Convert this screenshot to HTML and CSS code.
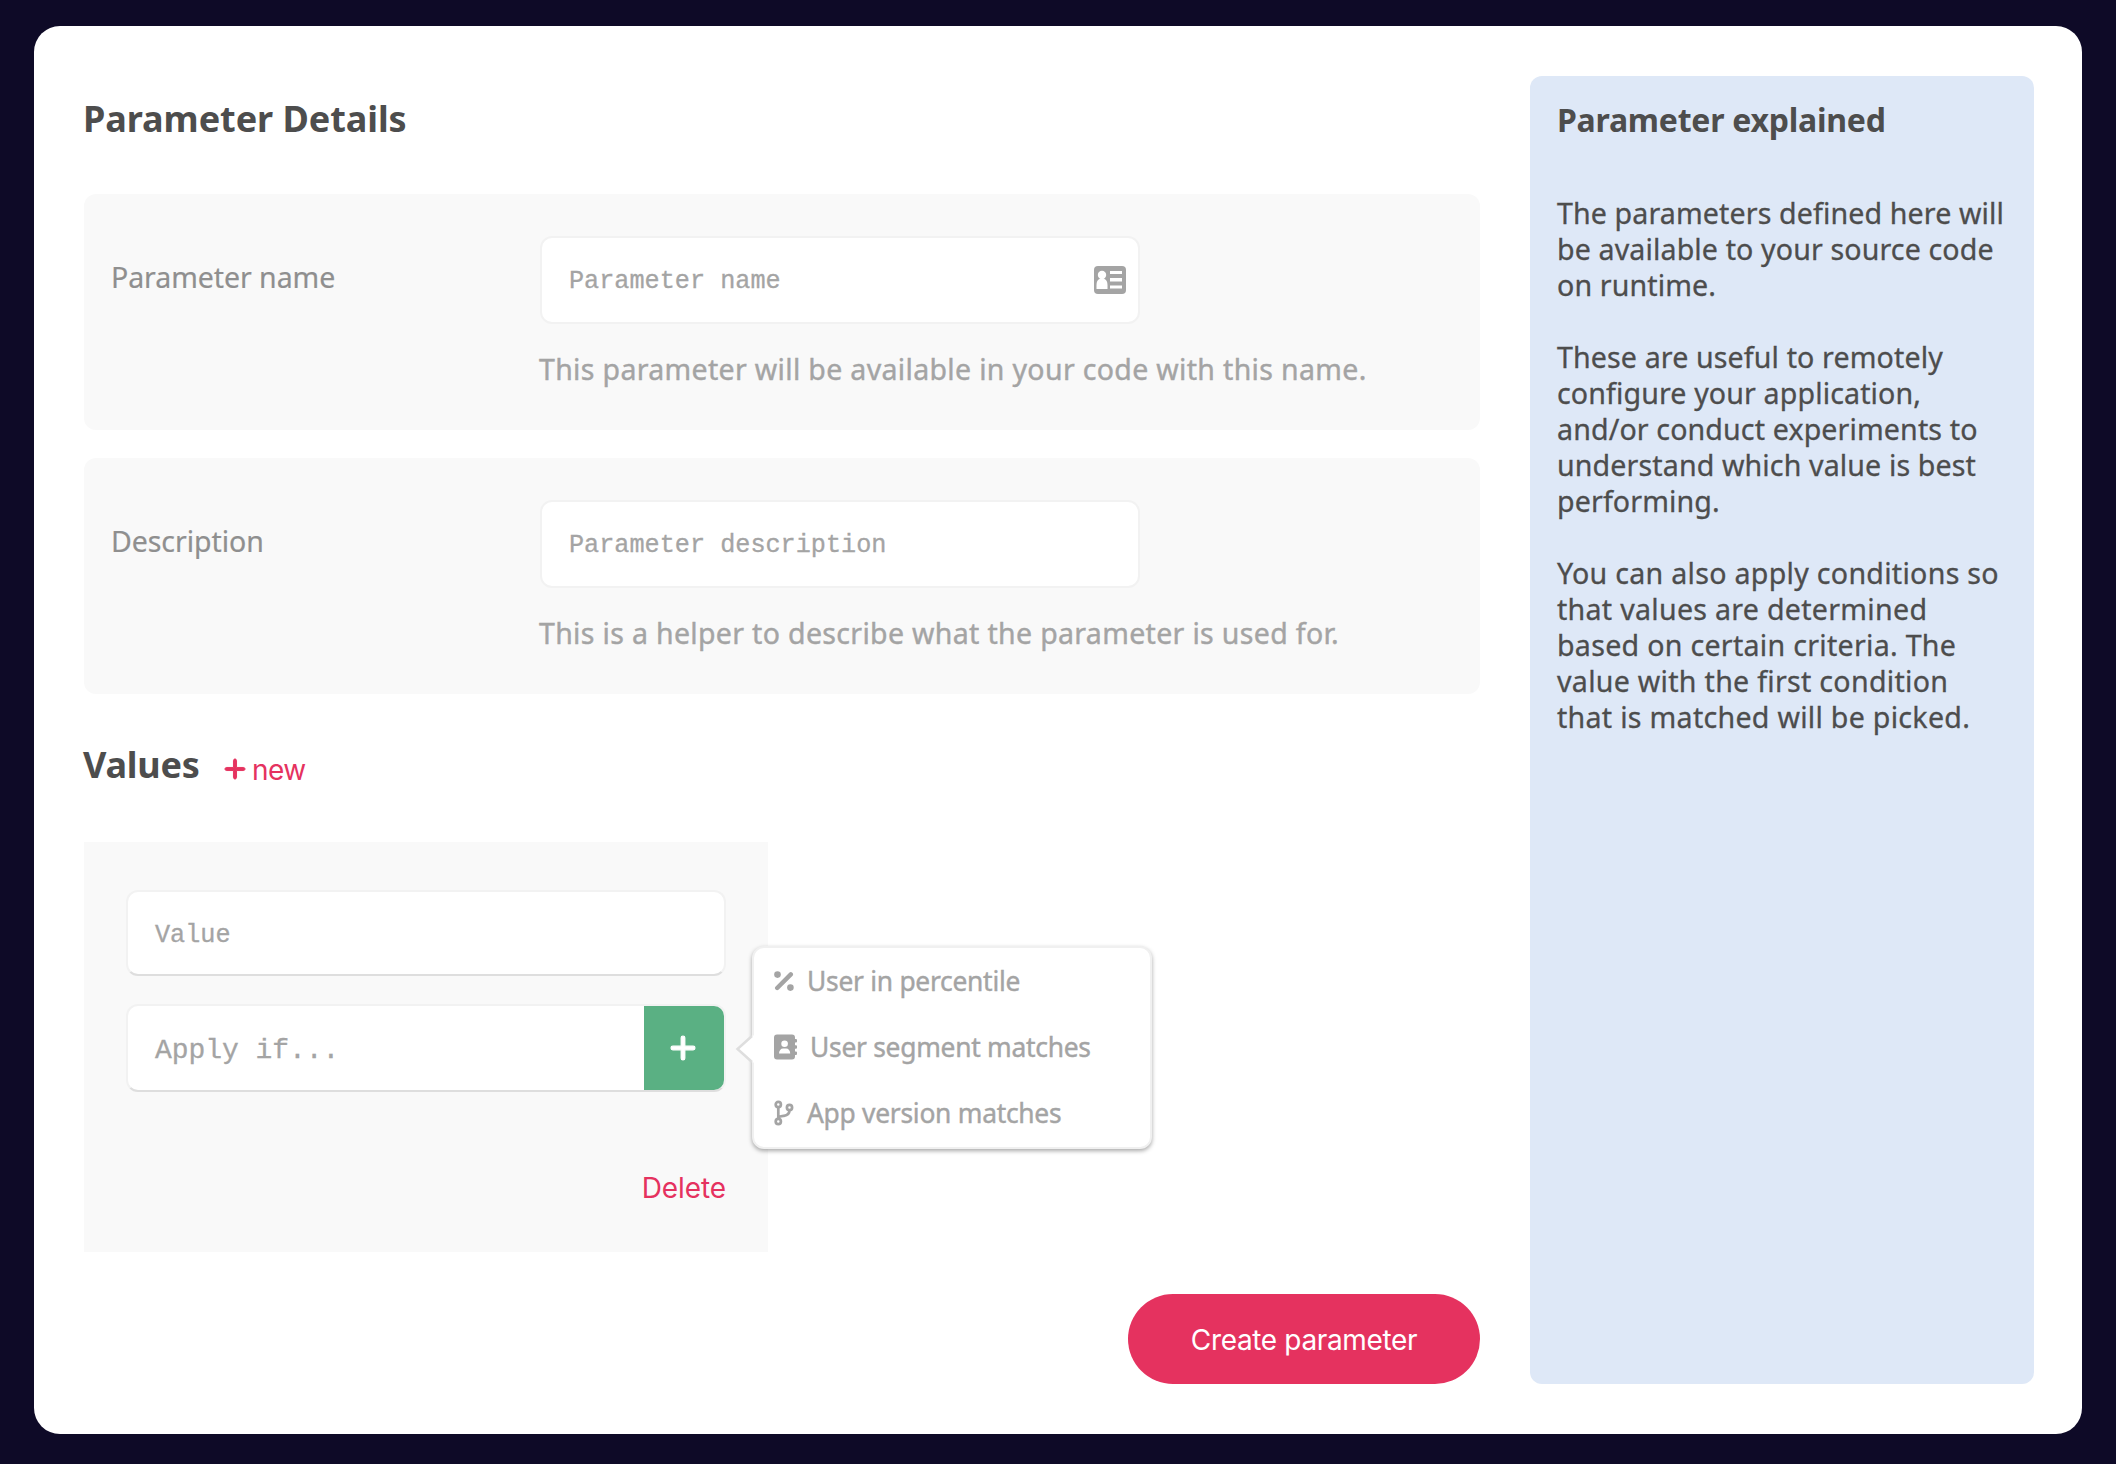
FILE: index.html
```html
<!DOCTYPE html>
<html lang="en">
<head>
<meta charset="utf-8">
<title>Parameter Details</title>
<link rel="stylesheet" href="styles.css">
</head>
<body>
<main class="panel">
  <section class="form">
    <h1 class="heading">Parameter Details</h1>
    <div class="card">
      <div class="label">Parameter name</div>
      <div class="field">
        <div class="input"><span class="placeholder">Parameter name</span>
          <svg class="id-icon" viewBox="0 0 32 28"><rect width="32" height="28" rx="4" fill="#a4a4a4"/><g fill="#fff"><circle cx="8" cy="9" r="4.2"/><path d="M2.500 23v-4c0-3.500 1.200-5.500 3-6h5c1.800.500 3 2.500 3 6v4zM16 5h12v3H16zM16 12h12v3.500H16zM16 19.500h12v3H16z"/></g></svg>
        </div>
        <p class="help">This parameter will be available in your code with this name.</p>
      </div>
    </div>
    <div class="card">
      <div class="label">Description</div>
      <div class="field">
        <div class="input"><span class="placeholder">Parameter description</span></div>
        <p class="help">This is a helper to describe what the parameter is used for.</p>
      </div>
    </div>
    <div class="values-head">
      <h2 class="heading-values">Values</h2>
      <a class="new"><svg class="plus-small" viewBox="16 48 416 416"><path class="plus-shape" d="M256 80c0-17.700-14.300-32-32-32s-32 14.300-32 32V224H48c-17.700 0-32 14.300-32 32s14.300 32 32 32H192V432c0 17.700 14.300 32 32 32s32-14.300 32-32V288H400c17.700 0 32-14.300 32-32s-14.300-32-32-32H256V80z"/></svg><span>new</span></a>
    </div>
    <div class="value-card">
      <div class="input value-input"><span class="placeholder value">Value</span></div>
      <div class="condition">
        <div class="input apply-input">
          <span class="placeholder apply">Apply if...</span>
          <button class="add"><svg class="plus-big" viewBox="16 48 416 416"><path class="plus-shape" d="M256 80c0-17.700-14.300-32-32-32s-32 14.300-32 32V224H48c-17.700 0-32 14.300-32 32s14.300 32 32 32H192V432c0 17.700 14.300 32 32 32s32-14.300 32-32V288H400c17.700 0 32-14.300 32-32s-14.300-32-32-32H256V80z"/></svg></button>
        </div>
        <div class="menu">
          <svg class="arrow" viewBox="0 0 20 30"><path d="M20 1 17 2 2 15 17 28 20 29z" fill="#fff"/><path d="M17 2 2.500 15 17 28" fill="none" stroke="#dedede" stroke-width="2.500"/></svg>
          <div class="item"><svg class="icon-pct" viewBox="0 0 20 20"><path d="M3.200 17 16.800 3.400" stroke="#a4a4a4" stroke-width="4.400" stroke-linecap="round"/><circle cx="3.500" cy="3.600" r="3.300" fill="#a4a4a4"/><circle cx="16.400" cy="16.600" r="3.300" fill="#a4a4a4"/></svg><span>User in percentile</span></div>
          <div class="item"><svg class="icon-book" viewBox="0 0 24 26"><path fill="#a4a4a4" d="M3 .500h15a3 3 0 0 1 3 3v19a3 3 0 0 1-3 3H3a3 3 0 0 1-3-3v-19a3 3 0 0 1 3-3zM21 5h1a1 1 0 0 1 1 1v1.500a1 1 0 0 1-1 1h-1zM21 11.200h1a1 1 0 0 1 1 1v1.500a1 1 0 0 1-1 1h-1zM21 17.400h1a1 1 0 0 1 1 1v1.500a1 1 0 0 1-1 1h-1z"/><circle cx="10.600" cy="9.800" r="3.300" fill="#fff"/><path d="M5 19.500c0-3 1.800-5 4-5h3.200c2.200 0 4 2 4 5z" fill="#fff"/></svg><span>User segment matches</span></div>
          <div class="item"><svg class="icon-branch" viewBox="0 0 20 26"><g fill="none" stroke="#a4a4a4" stroke-width="2.700"><circle cx="4.300" cy="4.500" r="2.600"/><circle cx="15.500" cy="7.500" r="2.600"/><circle cx="4.300" cy="21.500" r="2.600"/><path d="M4.300 7v12M15.500 10c0 4-2 5.300-5.500 5.800-3.500.500-5.200.700-5.700 1.500"/></g></svg><span>App version matches</span></div>
        </div>
      </div>
      <a class="delete">Delete</a>
    </div>
    <button class="create">Create parameter</button>
  </section>
  <aside class="aside">
    <h3 class="aside-title">Parameter explained</h3>
    <p class="para">The parameters defined here will<br>be available to your source code<br>on runtime.</p>
    <p class="para">These are useful to remotely<br>configure your application,<br>and/or conduct experiments to<br>understand which value is best<br>performing.</p>
    <p class="para para-last">You can also apply conditions so<br>that values are determined<br>based on certain criteria. The<br>value with the first condition<br>that is matched will be picked.</p>
  </aside>
</main>
</body>
</html>
```
FILE: styles.css
```css
* { box-sizing: border-box; margin: 0; }
body { background: #0e0a27; padding: 26px 34px 30px; font-family: "Noto Sans", "Open Sans", sans-serif; color: #4d4d4d; }
.panel { height: 1408px; background: #fff; border-radius: 26px; padding: 50px 48px 50px 50px; display: flex; gap: 50px; }
.form { width: 1396px; display: flex; flex-direction: column; }
.heading, .heading-values { font-size: 36px; line-height: 44px; font-weight: 700; white-space: nowrap; letter-spacing: -.06px; }
.heading { margin: 21px 0 53px -1px; }
.card { height: 236px; margin-bottom: 28px; padding: 42px 28px 0 27px; background: #f9f9f9; border-radius: 12px; display: flex; flex: none; }
.label { width: 429px; margin-top: 23px; font-size: 28.5px; line-height: 36px; color: #8f8f8f; letter-spacing: -.06px; -webkit-text-stroke: .2px #8f8f8f; }
.field { width: 840px; }
.input { width: 600px; height: 88px; background: #fff; border: 2px solid #f2f2f2; border-radius: 12px; padding: 0 12px 0 27px; display: flex; align-items: center; justify-content: space-between; flex: none; }
.placeholder { font: 25.2px/36px "Courier New", "Liberation Mono", monospace; color: #a4a4a4; -webkit-text-stroke: .3px #a4a4a4; padding-top: 4px; }
.id-icon { width: 32px; height: 28px; }
.help { margin-top: 27px; margin-left: -1px; font-size: 28.5px; line-height: 36px; color: #a4a4a4; -webkit-text-stroke: .4px #a4a4a4; white-space: nowrap; letter-spacing: .33px; }
.values-head { margin-top: 21px; height: 99px; display: flex; align-items: flex-start; }
.heading-values { width: 142px; margin-left: -1px; letter-spacing: -.2px; }
.new { display: flex; align-items: center; gap: 7px; margin-top: 9px; font: 28px/36px Inter, sans-serif; letter-spacing: -.6px; color: #e5325f; }
.plus-small { width: 20px; height: 20px; margin-top: -2px; overflow: visible; }
.plus-shape { fill: currentColor; stroke: currentColor; stroke-width: 20; }
.value-card { width: 684px; height: 410px; background: #f9f9f9; padding: 48px 42px 0; display: flex; flex-direction: column; flex: none; }
.value-input { height: 86px; border-bottom-color: #dedede; }
.value { padding-top: 6px; }
.condition { position: relative; margin-top: 28px; }
.apply-input { border-bottom-color: #dedede; padding-right: 0; }
.apply { font-size: 28px; padding-top: 6px; letter-spacing: -.05px; }
.add { width: 80px; height: 84px; padding: 0; border: 0; border-radius: 0 10px 10px 0; background: #5ab083; color: #fff; display: flex; align-items: center; justify-content: center; }
.plus-big { width: 24px; height: 24px; margin-right: 2px; overflow: visible; }
.menu { position: absolute; left: 626px; top: -58px; width: 400px; height: 203px; background: #fff; border: 2px solid #f0f0f0; border-radius: 12px; box-shadow: 0 2px 4px rgba(0,0,0,.34); padding: 0 0 0 20px; }
.arrow { position: absolute; left: -19px; top: 86px; width: 20px; height: 30px; }
.item { height: 66px; display: flex; align-items: center; font-size: 26.4px; line-height: 36px; color: #a4a4a4; -webkit-text-stroke: .4px #a4a4a4; white-space: nowrap; letter-spacing: -.27px; }
.icon-pct, .icon-branch { width: 20px; margin-right: 13px; }
.icon-pct { height: 20px; }
.icon-book { width: 24px; height: 26px; margin-right: 12px; }
.icon-branch { height: 26px; }
.delete { margin-top: 78px; align-self: flex-end; font: 28px/36px Inter, sans-serif; letter-spacing: -.1px; color: #e5325f; }
.create { align-self: flex-end; margin-top: 42px; width: 352px; height: 90px; padding: 2px 0 0; border: 0; border-radius: 45px; background: #e5325f; color: #fff; font: 28px/36px Inter, sans-serif; letter-spacing: -.35px; }
.aside { width: 504px; height: 1308px; background: #dee8f7; border-radius: 12px; padding: 24px 0 0 27px; white-space: nowrap; }
.aside-title { font-size: 32px; line-height: 40px; font-weight: 700; letter-spacing: -.25px; margin-bottom: 55px; }
.para { font-size: 28.6px; line-height: 36px; margin-bottom: 36px; letter-spacing: .12px; -webkit-text-stroke: .3px #4d4d4d; }
.para-last { letter-spacing: .28px; }
```
